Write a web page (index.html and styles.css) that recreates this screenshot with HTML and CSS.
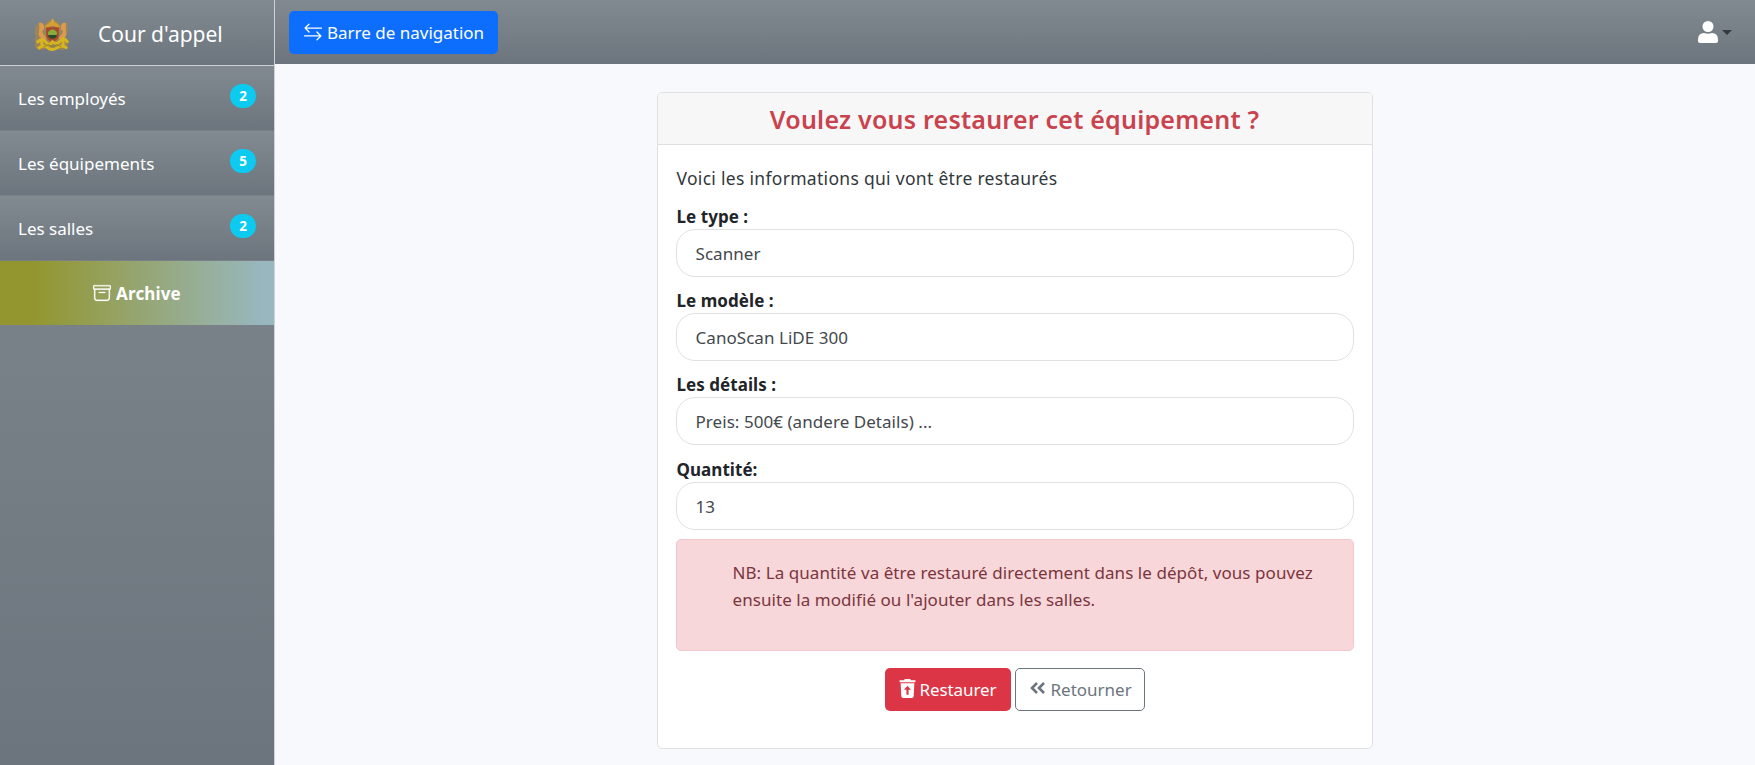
FILE: index.html
```html
<!DOCTYPE html>
<html lang="fr">
<head>
<meta charset="utf-8">
<title>Cour d'appel</title>
<link rel="stylesheet" href="styles.css">
</head>
<body>
<div class="layout">
  <aside class="sidebar">
    <div class="brand">
      <svg class="brand-logo" viewBox="0 0 36 34">
        <path d="M3 5q4-3 6 2l3-3 6-4 6 4 3 3q2-5 6-2l1 8-2 5 2 10-6 5-8-2-4 2-4-2-8 2-6-5 3-10-3-5z" fill="#b98a35" opacity=".55"/>
        <path d="M4 5q4-2 5 2t-1 5 2 6-3 3q-4-3-3-7 1-3 0-9zM32 5q-4-2-5 2t1 5-2 6 3 3q4-3 3-7-1-3 0-9z" fill="#dc9a4c"/>
        <path d="M10 9q3-5 8-6 5 1 8 6l-3 1q-5-5-10 0z" fill="#d5a02f"/>
        <path d="M18 0l1.500 3-1.500 2-1.500-2z" fill="#d8a935"/>
        <path d="M11.500 9h13v8q0 5-6.500 7-6.500-2-6.500-7z" fill="#a8472a"/>
        <path d="M13.500 14q4.500-6 9 0v3h-9z" fill="#86ad3b"/>
        <path d="M13.500 17h9q0 3-4.500 4-4.500-1-4.500-4z" fill="#294b2b"/>
        <path d="M2 25q5-6 9-1t7 0q4 4 8-1t8 2M3 31q6-5 10-1t10 0 10 1M7 21v9M29 21v9" fill="none" stroke="#d8b51d" stroke-width="3"/>
        <path d="M9 29l5-2 4 2 4-2 5 2" fill="none" stroke="#8c861f" stroke-width="1"/>
      </svg>
      <span class="brand-name">Cour d'appel</span>
    </div>
    <nav class="menu">
      <a class="menu-item"><span>Les employés</span><span class="badge">2</span></a>
      <a class="menu-item"><span>Les équipements</span><span class="badge">5</span></a>
      <a class="menu-item"><span>Les salles</span><span class="badge">2</span></a>
      <a class="menu-item archive">
        <svg class="icon" viewBox="0 0 16 16" fill="currentColor" stroke="currentColor" stroke-width=".25"><path d="M0 2a1 1 0 0 1 1-1h14a1 1 0 0 1 1 1v2a1 1 0 0 1-1 1v7.500a2.500 2.500 0 0 1-2.500 2.500h-9A2.500 2.500 0 0 1 1 12.500V5a1 1 0 0 1-1-1V2zm2 3v7.500A1.500 1.500 0 0 0 3.500 14h9a1.500 1.500 0 0 0 1.500-1.500V5H2zm13-3H1v2h14V2zM5 7.500a.5.5 0 0 1 .5-.5h5a.5.5 0 0 1 0 1h-5a.5.5 0 0 1-.5-.5z"/></svg>
        <span class="archive-name">Archive</span>
      </a>
    </nav>
  </aside>
  <div class="page">
    <header class="topbar">
      <button class="btn btn-primary">
        <svg class="icon" viewBox="0 0 16 16" fill="none" stroke="currentColor" stroke-width="1.150" stroke-linecap="round" stroke-linejoin="round"><path d="M15.500 4.500H1M4.500 1 1 4.500 4.500 8M.5 11.500H15M11.500 8 15 11.500 11.500 15"/></svg>
        <span>Barre de navigation</span>
      </button>
      <div class="user">
        <svg class="user-icon" viewBox="0 0 20 22" fill="#fff"><circle cx="10" cy="5.500" r="5.500"/><path d="M0 19q0-7 6-7 4 1.500 8 0 6 0 6 7v1q0 2-2 2H2q-2 0-2-2z"/></svg>
        <span class="caret"></span>
      </div>
    </header>
    <main class="content">
      <section class="card">
        <div class="card-header"><h1 class="card-title">Voulez vous restaurer cet équipement ?</h1></div>
        <div class="card-body">
          <p class="intro">Voici les informations qui vont être restaurés</p>
          <div class="field"><label class="label">Le type :</label><div class="input">Scanner</div></div>
          <div class="field"><label class="label">Le modèle :</label><div class="input">CanoScan LiDE 300</div></div>
          <div class="field"><label class="label">Les détails :</label><div class="input">Preis: 500€ (andere Details) ...</div></div>
          <div class="field"><label class="label">Quantité:</label><div class="input">13</div></div>
          <div class="alert">NB: La quantité va être restauré directement dans le dépôt, vous pouvez<br>ensuite la modifié ou l'ajouter dans les salles.</div>
          <div class="actions">
            <button class="btn btn-danger">
              <svg class="trash" viewBox="0 0 16 18"><path d="M5.500 0h5l.8 1.200H15.500V3H.5V1.200H4.700zM1.500 4h13l-.6 12.200Q13.800 18 12 18H4Q2.200 18 2.100 16.200z" fill="#fff"/><path d="M8 6.500l3.300 3.800H9V15H7v-4.700H4.700z" fill="#dc3545"/></svg>
              <span>Restaurer</span>
            </button>
            <button class="btn btn-outline">
              <svg class="chevrons" viewBox="0 0 15 12" fill="none" stroke="currentColor" stroke-width="2.600"><path d="M7 1 2 6l5 5M14 1 9 6l5 5"/></svg>
              <span>Retourner</span>
            </button>
          </div>
        </div>
      </section>
    </main>
  </div>
</div>
</body>
</html>
```
FILE: styles.css
```css
* { box-sizing: border-box; }
body { margin: 0; font-family: "Noto Sans", "Open Sans", sans-serif; font-size: 17px; line-height: 27px; color: #212529; background: #f8f9fc; }
.layout { display: flex; height: 765px; overflow: hidden; }
.sidebar { width: 275px; flex: none; border-right: 1px solid #ced2d7; background: linear-gradient(#828a91, #6c757d); color: #fff; }
.brand { height: 66px; display: flex; align-items: center; padding: 4px 0 0 35px; border-bottom: 1px solid #ccd1d6; background: linear-gradient(#828a91, #6c757d); }
.brand-logo { width: 35px; height: 34px; margin-right: 28px; }
.brand-name { font-size: 21px; white-space: nowrap; }
.menu-item { height: 65px; display: flex; align-items: center; justify-content: space-between; padding: 0 18px; white-space: nowrap; background: linear-gradient(#828a91, #6c757d); border-bottom: 1px solid #798087; }
.badge { width: 26px; height: 24px; border-radius: 12px; background: #0dcaf0; font-size: 13.5px; font-weight: 700; line-height: 24px; text-align: center; margin-top: -5px; }
.archive { justify-content: center; gap: 5px; font-weight: 700; background: linear-gradient(90deg, #93962e 12%, #98b7bf 96%); }
.archive-name { letter-spacing: .15px; }
.icon { width: 18px; height: 18px; flex: none; }
.page { flex: 1; }
.topbar { height: 64px; display: flex; align-items: center; justify-content: space-between; padding: 0 23px 0 14px; background: linear-gradient(#828a91, #6c757d); }
.btn { height: 43px; display: flex; align-items: center; gap: 4px; padding: 0 14px; border: 1px solid transparent; border-radius: 5px; font: inherit; white-space: nowrap; }
.btn-primary { width: 209px; gap: 5px; background: #0d6efd; color: #fff; }
.user { display: flex; align-items: center; gap: 4px; }
.user-icon { width: 20px; height: 22px; margin-top: -1px; }
.caret { border: 5px solid transparent; border-top-color: #343a40; border-bottom: 0; }
.content { display: flex; justify-content: center; padding: 28px 1px 0 0; }
.card { width: 716px; height: 657px; border: 1px solid #dfe0e2; border-radius: 5px; background: #fff; }
.card-header { height: 52px; display: flex; align-items: center; justify-content: center; border-bottom: 1px solid #dfdfdf; background: #f7f7f7; border-radius: 4px 4px 0 0; }
.card-title { margin: 0; padding-top: 1px; font-size: 25px; font-weight: 600; line-height: 32px; letter-spacing: .22px; color: #c9434f; white-space: nowrap; }
.card-body { padding: 20px 18px; }
.intro { margin: 0 0 10px; padding-left: 1px; font-size: 17.5px; letter-spacing: .3px; color: #33383c; }
.field { display: flex; flex-direction: column; height: 84.200px; }
.label { font-weight: 700; height: 27px; padding: 1px 0 0 1px; letter-spacing: .05px; }
.input { height: 48px; border: 1px solid #dfe2e5; border-radius: 19px; padding: 10px 19px; color: #43484c; letter-spacing: .05px; }
.alert { height: 112px; padding: 19px 56px; border: 1px solid #f1c9cd; border-radius: 5px; background: #f8d7da; color: #7b353d; white-space: nowrap; letter-spacing: .06px; }
.actions { display: flex; justify-content: center; gap: 4px; margin-top: 17px; }
.btn-danger { width: 126px; background: #dc3545; color: #fff; letter-spacing: -.1px; }
.btn-outline { width: 130px; border-color: #6c757d; background: #fff; color: #6c757d; gap: 6px; }
.trash { width: 17px; height: 19px; flex: none; margin-left: -1px; margin-top: -2px; }
.chevrons { width: 15px; height: 12px; flex: none; margin-top: -2px; }
```
